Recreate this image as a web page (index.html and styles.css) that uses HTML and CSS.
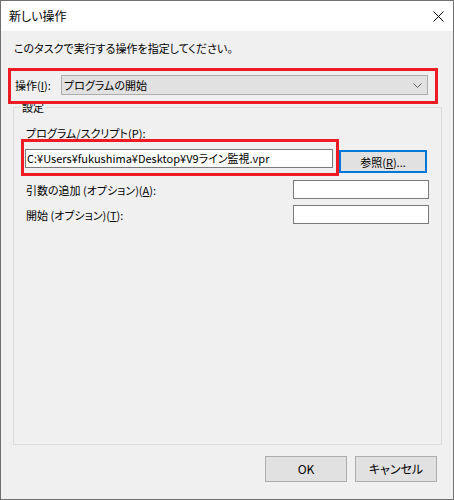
FILE: index.html
```html
<!DOCTYPE html>
<html lang="ja">
<head>
<meta charset="utf-8">
<link rel="stylesheet" href="styles.css">
</head>
<body>
<div class="window">
  <div class="titlebar">
    <span class="title">新しい操作</span>
    <svg class="close" width="11" height="11" viewBox="0 0 11 11"><path d="M0.5 0.5 L10.5 10.5 M10.5 0.5 L0.5 10.5" stroke="#000" stroke-width="1" fill="none"/></svg>
  </div>
  <div class="content">
    <p class="desc">このタスクで実行する操作を指定してください。</p>
    <div class="action-row">
      <span class="action-label">操作(<u>I</u>):</span>
      <div class="combo">
        <span class="combo-text">プログラムの開始</span>
        <svg class="chevron" width="9" height="5" viewBox="0 0 9 5"><path d="M0.5 0.5 L4.5 4.5 L8.5 0.5" stroke="#606060" stroke-width="1" fill="none"/></svg>
      </div>
    </div>
    <fieldset class="group">
      <legend class="legend">設定</legend>
      <div class="label prog-label">プログラム/スクリプト(<u>P</u>):</div>
      <div class="prog-row">
        <div class="textbox prog-input">C:¥Users¥fukushima¥Desktop¥V9ライン監視.vpr</div>
        <div class="button browse">参照(<u>R</u>)...</div>
      </div>
      <div class="opt-row first">
        <span class="label">引数の追加 (オプション)(<u>A</u>):</span>
        <div class="textbox small"></div>
      </div>
      <div class="opt-row">
        <span class="label">開始 (オプション)(<u>T</u>):</span>
        <div class="textbox small"></div>
      </div>
    </fieldset>
    <div class="buttons">
      <div class="button dlg">OK</div>
      <div class="button dlg">キャンセル</div>
    </div>
  </div>
  <div class="mark mark-action"></div>
  <div class="mark mark-prog"></div>
</div>
</body>
</html>
```

FILE: styles.css
```css
html, body {
  margin: 0;
  padding: 0;
}
body {
  font-family: "Noto Sans CJK JP", "Noto Sans", sans-serif;
  font-size: 11px;
  font-feature-settings: "palt";
  color: #000;
  background: #f0f0f0;
}
u {
  text-decoration: underline;
  text-underline-offset: 1px;
}
.window {
  position: relative;
  width: 454px;
  height: 500px;
  box-sizing: border-box;
  border: 1px solid #707070;
  display: flex;
  flex-direction: column;
  background: #f0f0f0;
}
.titlebar {
  height: 30px;
  flex: none;
  background: #fff;
  display: flex;
  align-items: center;
  justify-content: space-between;
  padding: 0 9px 0 8px;
}
.title {
  font-size: 12px;
  line-height: 16px;
}
.close {
  display: block;
}
.content {
  flex: 1;
  display: flex;
  flex-direction: column;
}
.desc {
  margin: 9px 0 0 13px;
  line-height: 16px;
}
.action-row {
  margin-top: 19px;
  height: 20px;
  display: flex;
  align-items: center;
  padding-left: 14px;
}
.action-label {
  width: 46px;
  flex: none;
  line-height: 16px;
}
.combo {
  width: 367px;
  height: 20px;
  box-sizing: border-box;
  border: 1px solid #adadad;
  background: #e1e1e1;
  display: flex;
  align-items: center;
  justify-content: space-between;
  padding: 0 5px 0 2px;
}
.combo-text {
  line-height: 16px;
}
.chevron {
  display: block;
}
.group {
  margin: 4px 0 0 12px;
  width: 429px;
  height: 346px;
  box-sizing: border-box;
  border: 1px solid #dcdcdc;
  padding: 0 0 0 11px;
  min-width: 0;
}
.legend {
  margin-left: -4px;
  padding: 0 1px;
  line-height: 16px;
}
.label {
  line-height: 16px;
  padding-left: 1px;
}
.prog-label {
  margin-top: 10px;
}
.prog-row {
  display: flex;
  align-items: flex-start;
  margin-top: 8px;
}
.textbox {
  box-sizing: border-box;
  height: 19px;
  border: 1px solid #7a7a7a;
  background: #fff;
}
.prog-input {
  width: 308px;
  padding-left: 1px;
  line-height: 17px;
  white-space: nowrap;
  overflow: hidden;
}
.button {
  box-sizing: border-box;
  border: 1px solid #adadad;
  background: #e1e1e1;
  display: flex;
  align-items: center;
  justify-content: center;
  line-height: 16px;
}
.browse {
  margin: 1px 0 0 6px;
  width: 88px;
  height: 23px;
  border: 2px solid #0078d7;
}
.opt-row {
  display: flex;
  align-items: center;
  justify-content: space-between;
  margin-top: 6px;
  padding-right: 12px;
}
.opt-row.first {
  margin-top: 7px;
}
.small {
  width: 136px;
}
.buttons {
  display: flex;
  justify-content: flex-end;
  gap: 8px;
  margin-top: 11px;
  padding-right: 16px;
}
.dlg {
  width: 82px;
  height: 26px;
  font-size: 12px;
}
.mark {
  position: absolute;
  border: 3px solid #ed1c24;
  box-sizing: border-box;
}
.mark-action {
  left: 7px;
  top: 67px;
  width: 430px;
  height: 36px;
}
.mark-prog {
  left: 20px;
  top: 138px;
  width: 318px;
  height: 37px;
}
```
